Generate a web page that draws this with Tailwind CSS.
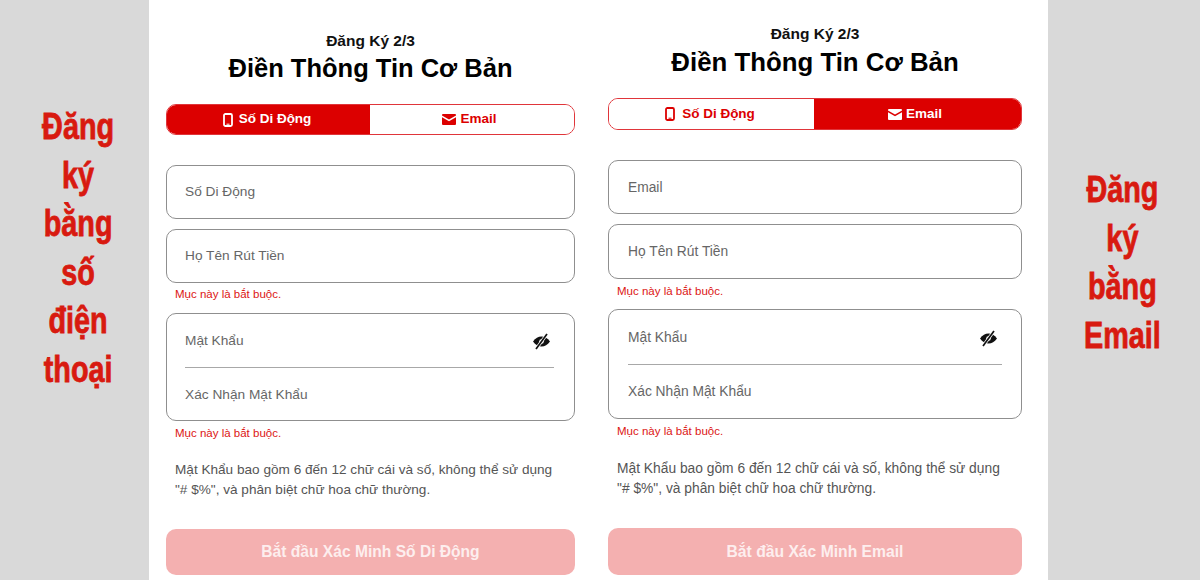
<!DOCTYPE html>
<html lang="en">
<head>
    <meta charset="UTF-8" />
    <meta name="viewport" content="width=device-width, initial-scale=1.0" />
    <title>Đăng Ký</title>
    <script src="https://cdn.jsdelivr.net/npm/@tailwindcss/browser@4"></script>
</head>
<body class="bg-[#d9d9d9] font-['Liberation_Sans',Arial,sans-serif] overflow-hidden">
<div class="flex w-[1200px] h-[580px] overflow-hidden">
    <!-- Nhãn trái -->
    <div class="w-[149px] shrink-0 pl-[9px] pt-[103px] text-center text-[#d81a10] font-bold text-[36px] leading-[48.5px] scale-x-[0.8] [-webkit-text-stroke:0.8px_#d81a10]">
        <p>Đăng</p><p>ký</p><p>bằng</p><p>số</p><p>điện</p><p>thoại</p>
    </div>

    <div class="w-[899px] shrink-0 bg-white flex pl-[17px]">
        <!-- Form số di động -->
        <div class="w-[409px] shrink-0">
            <p class="mt-[32px] text-center text-[15.5px] leading-[18px] font-bold text-[#111]">Đăng Ký 2/3</p>
            <h1 class="mt-[1px] text-center text-[25.5px] leading-[34px] font-bold text-black">Điền Thông Tin Cơ Bản</h1>
            <div class="mt-[19px] h-[31px] flex rounded-[10px] border border-[#e0353a] overflow-hidden text-[13.5px] font-bold">
                <div class="w-[203px] bg-[#dc0000] text-white flex items-center justify-center gap-[6px] pr-[3px]">
                    <svg class="w-[10px] h-[14px]" viewBox="0 0 10 14" fill="none" stroke="currentColor" stroke-width="1.8"><rect x="1" y="1" width="8" height="12" rx="1.5"/><path d="M3.5 11.2h3" stroke-width="1"/></svg>
                    <span>Số Di Động</span>
                </div>
                <div class="flex-1 bg-white text-[#dc0000] flex items-center justify-center gap-[4px] pr-[5px]">
                    <svg class="w-[14px] h-[11px]" viewBox="0 0 14 11" fill="currentColor"><path d="M1 0h12a1 1 0 0 1 1 1v.6L7 5.6 0 1.6V1a1 1 0 0 1 1-1z"/><path d="M0 3.2l7 4 7-4V10a1 1 0 0 1-1 1H1a1 1 0 0 1-1-1z"/></svg>
                    <span>Email</span>
                </div>
            </div>
            <div class="mt-[30px] h-[54px] rounded-[10px] border border-[#8f8f8f] pl-[18px] flex items-center text-[13.7px] text-[#666]">Số Di Động</div>
            <div class="mt-[10px] h-[54px] rounded-[10px] border border-[#8f8f8f] pl-[18px] flex items-center text-[13.7px] text-[#666]">Họ Tên Rút Tiền</div>
            <p class="mt-[4px] h-[14px] pl-[9px] text-[11.5px] leading-[14px] text-[#dc1414]">Mục này là bắt buộc.</p>
            <div class="mt-[12px] h-[108px] rounded-[10px] border border-[#8f8f8f] pl-[18px] pr-[20px] text-[13.7px] text-[#666]">
                <div class="h-[54px] pt-[2px] flex items-center justify-between border-b border-[#a8a8a8]">
                    <span>Mật Khẩu</span>
                    <svg class="w-[19px] h-[17px] mr-[3px]" viewBox="0 0 19 17" fill="none"><path d="M1 8.5C3.5 5 6.2 3.4 9.5 3.4S15.5 5 18 8.5c-2.5 3.5-5.2 5.1-8.5 5.1S3.5 12 1 8.5z" fill="#111"/><circle cx="9.5" cy="8.5" r="2.3" fill="#fff"/><path d="M15 1L4 16" stroke="#fff" stroke-width="3"/><path d="M15 1L4 16" stroke="#111" stroke-width="1.7"/></svg>
                </div>
                <div class="h-[53px] pt-[1px] flex items-center">Xác Nhận Mật Khẩu</div>
            </div>
            <p class="mt-[5px] h-[14px] pl-[9px] text-[11.5px] leading-[14px] text-[#dc1414]">Mục này là bắt buộc.</p>
            <p class="mt-[20px] pl-[9px] text-[13.6px] leading-[20px] text-[#555]">Mật Khẩu bao gồm 6 đến 12 chữ cái và số, không thể sử dụng<br />"# $%", và phân biệt chữ hoa chữ thường.</p>
            <div class="mt-[29px] h-[46px] rounded-[10px] bg-[#f4b0b0] text-[#fdeeee] font-bold text-[15.6px] flex items-center justify-center">Bắt đầu Xác Minh Số Di Động</div>
        </div>

        <!-- Form email -->
        <div class="w-[414px] shrink-0 ml-[33px]">
            <p class="mt-[25px] text-center text-[15.5px] leading-[18px] font-bold text-[#111]">Đăng Ký 2/3</p>
            <h1 class="mt-[2px] text-center text-[25.8px] leading-[34px] font-bold text-black">Điền Thông Tin Cơ Bản</h1>
            <div class="mt-[19px] h-[32px] flex rounded-[10px] border border-[#e0353a] overflow-hidden text-[13.5px] font-bold">
                <div class="w-[205px] bg-white text-[#dc0000] flex items-center justify-center gap-[7px] pr-[3px]">
                    <svg class="w-[10px] h-[14px]" viewBox="0 0 10 14" fill="none" stroke="currentColor" stroke-width="1.8"><rect x="1" y="1" width="8" height="12" rx="1.5"/><path d="M3.5 11.2h3" stroke-width="1"/></svg>
                    <span>Số Di Động</span>
                </div>
                <div class="flex-1 bg-[#dc0000] text-white flex items-center justify-center gap-[4px] pr-[5px]">
                    <svg class="w-[14px] h-[11px]" viewBox="0 0 14 11" fill="currentColor"><path d="M1 0h12a1 1 0 0 1 1 1v.6L7 5.6 0 1.6V1a1 1 0 0 1 1-1z"/><path d="M0 3.2l7 4 7-4V10a1 1 0 0 1-1 1H1a1 1 0 0 1-1-1z"/></svg>
                    <span>Email</span>
                </div>
            </div>
            <div class="mt-[30px] h-[54px] pt-[2px] rounded-[10px] border border-[#8f8f8f] pl-[19px] flex items-center text-[13.8px] text-[#666]">Email</div>
            <div class="mt-[10px] h-[55px] pt-[2px] rounded-[10px] border border-[#8f8f8f] pl-[19px] flex items-center text-[13.8px] text-[#666]">Họ Tên Rút Tiền</div>
            <p class="mt-[5px] h-[14px] pl-[9px] text-[11.5px] leading-[14px] text-[#dc1414]">Mục này là bắt buộc.</p>
            <div class="mt-[11px] h-[110px] rounded-[10px] border border-[#8f8f8f] px-[19px] text-[13.8px] text-[#666]">
                <div class="h-[55px] pt-[2px] flex items-center justify-between border-b border-[#a8a8a8]">
                    <span>Mật Khẩu</span>
                    <svg class="w-[19px] h-[17px] mr-[4px]" viewBox="0 0 19 17" fill="none"><path d="M1 8.5C3.5 5 6.2 3.4 9.5 3.4S15.5 5 18 8.5c-2.5 3.5-5.2 5.1-8.5 5.1S3.5 12 1 8.5z" fill="#111"/><circle cx="9.5" cy="8.5" r="2.3" fill="#fff"/><path d="M15 1L4 16" stroke="#fff" stroke-width="3"/><path d="M15 1L4 16" stroke="#111" stroke-width="1.7"/></svg>
                </div>
                <div class="h-[53px] pt-[2px] flex items-center">Xác Nhận Mật Khẩu</div>
            </div>
            <p class="mt-[5px] h-[14px] pl-[9px] text-[11.5px] leading-[14px] text-[#dc1414]">Mục này là bắt buộc.</p>
            <p class="mt-[21px] pl-[9px] text-[13.8px] leading-[20px] text-[#555]">Mật Khẩu bao gồm 6 đến 12 chữ cái và số, không thể sử dụng<br />"# $%", và phân biệt chữ hoa chữ thường.</p>
            <div class="mt-[29px] h-[47px] rounded-[10px] bg-[#f4b0b0] text-[#fdeeee] font-bold text-[15.7px] flex items-center justify-center">Bắt đầu Xác Minh Email</div>
        </div>
    </div>

    <!-- Nhãn phải -->
    <div class="w-[152px] shrink-0 pr-[4px] pt-[166px] text-center text-[#d81a10] font-bold text-[36px] leading-[48.5px] scale-x-[0.8] [-webkit-text-stroke:0.8px_#d81a10]">
        <p>Đăng</p><p>ký</p><p>bằng</p><p>Email</p>
    </div>
</div>
</body>
</html>
